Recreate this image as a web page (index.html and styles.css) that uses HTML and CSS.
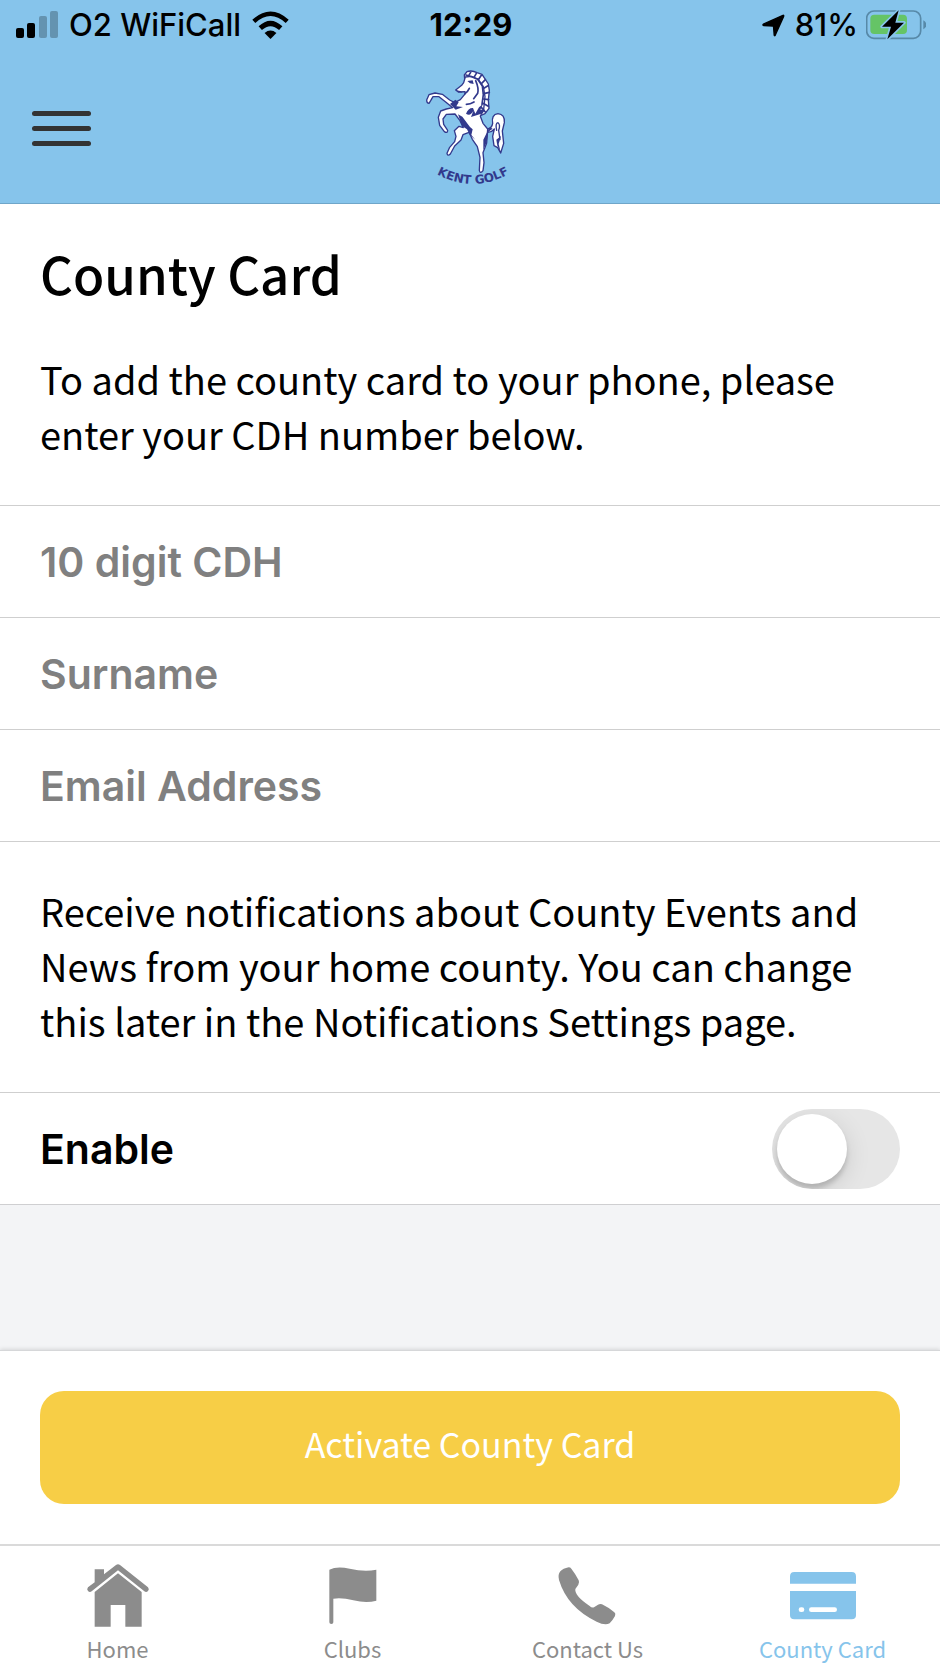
FILE: index.html
```html
<!DOCTYPE html>
<html lang="en">
<head>
<meta charset="utf-8">
<meta name="viewport" content="width=device-width, initial-scale=1">
<title>County Card</title>
<link rel="stylesheet" href="styles.css">
</head>
<body>
<header class="top">
  <div class="status">
    <div class="status-left">
      <svg class="signal" viewBox="0 0 42 28" aria-hidden="true">
        <rect x="0" y="17" width="8" height="10" rx="2"/>
        <rect x="11" y="12" width="8" height="15" rx="2"/>
        <rect x="23" y="5" width="8" height="22" rx="2" opacity=".25"/>
        <rect x="34" y="0" width="8" height="27" rx="2" opacity=".25"/>
      </svg>
      <span>O2 WiFiCall</span>
      <svg class="wifi" viewBox="0 0 112 84" aria-hidden="true">
        <path d="M1 26Q56-24 111 26L102 36Q56-6 10 36Z"/>
        <path d="M20 46Q56 12 92 46L82 57Q56 34 30 57Z"/>
        <path d="M38 66Q56 52 74 66L56 84Z"/>
      </svg>
    </div>
    <span class="clock">12:29</span>
    <div class="status-right">
      <svg class="locate" viewBox="0 0 68 68" aria-hidden="true"><path d="M4 30L62 4Q65 3 64 7L39 63Q37 66 36 62L34 36L5 34Q1 33 4 30Z" stroke="#000" stroke-width="4" stroke-linejoin="round"/></svg>
      <span>81%</span>
      <svg class="battery" viewBox="0 0 180 90" aria-hidden="true">
        <rect x="2" y="3" width="162" height="82" rx="22" fill="none" stroke="#5789a8" stroke-width="5"/>
        <path d="M172 31Q181 36 181 44Q181 53 172 58Z" fill="#5789a8"/>
        <rect x="13" y="14" width="110" height="58" rx="12" fill="#65c466"/>
        <path d="M98 1L48 50H75L64 88L114 38H88Z" fill="#000" stroke="#86c4eb" stroke-width="10" stroke-linejoin="round" paint-order="stroke"/>
      </svg>
    </div>
  </div>
  <nav class="bar">
    <button class="menu" type="button" aria-label="Menu"><span></span><span></span><span></span></button>
    <svg class="logo" viewBox="0 0 360 390" role="img" aria-label="Kent Golf">
      <defs><path id="arc" d="M50 324Q190 420 328 322"/></defs>
      <g fill="#fff" stroke="#32398c" stroke-width="4" stroke-linejoin="round" stroke-linecap="round">
        <path d="M234 207Q246 203 248 190Q243 164 264 161Q285 163 283 188L277 213L281 250L272 279L263 263L252 257L248 229L253 207Q244 218 233 216Z"/>
        <path d="M171 35Q186 30 201 38L216 43L226 58L235 72L238 92L235 120L237 145L225 161L209 168L196 164L205 145L214 112L208 79L189 61L164 57L163 45Z"/>
        <path d="M166 51L184 49L204 57L220 80L225 110L221 148L211 169L219 190L233 207L230 249L219 278L222 308L219 332Q211 343 208 331L210 292L202 260L187 238L177 217L159 224L153 240L134 258L121 282Q113 290 111 280L119 262L134 245L138 229L133 212L147 199L160 203L150 182L135 162L109 163L99 177L101 193L113 211Q113 221 103 215L89 196L85 172L92 153L109 147L128 143L108 127L87 110L69 110L62 122L57 130Q50 130 50 120L57 104L75 99L97 103L119 120L134 128L151 119L166 101L165 95L145 96L137 90L155 76L161 68Z"/>
        <path d="M260 211Q255 189 264 188Q272 194 266 211L270 239" fill="none"/>
      </g>
      <g fill="#32398c">
        <path d="M120 132L136 119L146 127L139 139L159 141L137 149Z"/>
        <path d="M189 144Q175 143 168 161Q181 171 191 151L183 171L202 165L218 160L225 149L211 149L219 132L207 142L196 161Z"/>
        <path d="M144 163L157 170L180 201L188 208L184 225L196 239L179 224L171 208L156 198Z"/>
        <path d="M230 219L220 239L220 270L230 247L235 215L248 206L240 202Z"/>
        <path d="M172 63L188 61L191 72L180 70ZM139 91L151 93L158 98L145 97ZM259 239L273 228L266 252L272 277L262 257Z"/>
      </g>
      <g fill="none" stroke="#32398c" stroke-width="5" stroke-linecap="round">
        <path d="M168 45L185 50L203 58L217 78L220 104L216 133M197 62Q207 85 203 100L191 116M165 101Q174 94 178 85M169 133Q181 133 192 126"/>
        <path d="M182 37L176 47M199 40L192 52M214 46L205 59M226 59L215 70M234 77L219 86M238 97L221 101M236 119L221 117M235 139L219 130M226 156L214 142"/>
      </g>
      <text class="logo-text"><textPath href="#arc" startOffset="50%" text-anchor="middle">KENT GOLF</textPath></text>
    </svg>
  </nav>
</header>
<main class="content">
  <form id="card-form">
    <section class="copy">
      <h1>County Card</h1>
      <p>To add the county card to your phone, please enter your CDH number below.</p>
    </section>
    <input class="field" type="text" inputmode="numeric" placeholder="10 digit CDH" aria-label="10 digit CDH">
    <input class="field" type="text" placeholder="Surname" aria-label="Surname">
    <input class="field" type="email" placeholder="Email Address" aria-label="Email Address">
    <section class="copy notice">
      <p>Receive notifications about County Events and News from your home county. You can change this later in the Notifications Settings page.</p>
    </section>
    <div class="enable">
      <label for="enable">Enable</label>
      <input class="switch" id="enable" type="checkbox" role="switch">
    </div>
  </form>
</main>
<div class="action"><button class="activate" type="submit" form="card-form">Activate County Card</button></div>
<nav class="tabs">
  <a href="#home">
    <svg viewBox="0 0 210 210" aria-hidden="true"><path d="M35 28H63V43L99 15Q105 11 111 15L195 82Q200 88 195 93Q190 98 184 94L105 31L26 94Q20 98 15 93Q10 88 15 82L35 67Z"/><path d="M105 40L176 96V200H127V135H83V200H35V96Z"/></svg>
    <span>Home</span>
  </a>
  <a href="#clubs">
    <svg viewBox="0 0 210 210" aria-hidden="true"><path d="M34 29Q56 18 95 26Q139 36 175 29V122Q145 130 106 121Q72 112 46 116V187Q46 192 40 192Q34 192 34 187Z"/></svg>
    <span>Clubs</span>
  </a>
  <a href="#contact">
    <svg viewBox="0 0 210 210" aria-hidden="true"><path d="M22 34Q30 25 47 22Q52 22 55 26Q67 41 77 61Q80 67 76 74L67 87Q64 107 110 138Q116 144 123 142L135 134Q141 131 147 133Q168 143 184 157Q189 161 186 168Q177 184 170 190Q155 197 131 185Q43 143 18 60Q14 43 22 34Z"/></svg>
    <span>Contact Us</span>
  </a>
  <a class="active" href="#card" aria-current="page">
    <svg viewBox="0 0 210 210" aria-hidden="true"><path d="M6 71V49Q6 36 19 36H191Q204 36 204 49V71ZM6 93H204V166Q204 178 191 178H19Q6 178 6 166ZM39 142Q32 142 32 149Q32 156 39 156H42Q49 156 49 149Q49 142 42 142ZM70 142Q63 142 63 149Q63 156 70 156H140Q147 156 147 149Q147 142 140 142Z" fill-rule="evenodd"/></svg>
    <span>County Card</span>
  </a>
</nav>
</body>
</html>
```
FILE: styles.css
```css
* { box-sizing: border-box; }
body {
  margin: 0;
  min-height: 100vh;
  display: flex;
  flex-direction: column;
  background: #f3f4f6;
  color: #000;
  font-family: "Noto Sans CJK JP", "Noto Sans", sans-serif;
}
.top { background: #86c4eb; border-bottom: 1px solid #6fa6c9; }
.status {
  display: grid;
  grid-template-columns: 1fr auto 1fr;
  align-items: center;
  height: 50px;
  padding: 0 14px 0 16px;
  font: 500 31px/32px Inter, sans-serif;
}
.status-left, .status-right { display: flex; align-items: center; }
.status-left { gap: 11px; }
.status-right { justify-content: flex-end; gap: 8px; }
.clock { font-weight: 700; }
.signal { width: 42px; height: 28px; }
.wifi { width: 37px; height: 28px; }
.locate { width: 23px; height: 23px; margin-right: 2px; }
.battery { width: 60px; height: 30px; }
.bar {
  display: grid;
  grid-template-columns: 1fr auto 1fr;
  align-items: center;
  padding: 10px 32px 13px;
}
.menu {
  display: flex;
  flex-direction: column;
  gap: 10px;
  width: 59px;
  padding: 6px 0 0;
  border: 0;
  background: none;
}
.menu span { width: 100%; height: 5px; border-radius: 3px; background: #333; }
.logo { width: 120px; height: 130px; }
.logo-text { font: 700 36px "DejaVu Sans", sans-serif; fill: #32398c; }
.content form { background: #fff; border-bottom: 1px solid #cfcfd1; }
.copy { padding: 37px 40px 44px; }
h1 { margin: 0 0 46px; font-size: 51px; line-height: 64px; font-weight: 500; }
p { margin: 0; font-size: 38px; line-height: 55px; }
.field {
  display: block;
  width: 100%;
  height: 112px;
  padding: 0 40px;
  border: 0;
  border-top: 1px solid #cfcfcf;
  border-radius: 0;
  background: #fff;
  font: 600 41px/50px Inter, sans-serif;
}
.field::placeholder { color: #808080; opacity: 1; }
.notice { padding-top: 41px; padding-bottom: 44px; border-top: 1px solid #cfcfcf; }
.enable {
  display: flex;
  align-items: center;
  justify-content: space-between;
  height: 112px;
  padding: 0 40px;
  border-top: 1px solid #cfcfcf;
  font: 600 41px/50px Inter, sans-serif;
}
.switch {
  appearance: none;
  width: 128px;
  height: 80px;
  margin: 0;
  padding: 5px;
  border-radius: 40px;
  background: #e6e6e6;
  overflow: hidden;
}
.switch::before {
  content: "";
  display: block;
  width: 70px;
  height: 70px;
  border-radius: 50%;
  background: #fff;
  box-shadow: 0 5px 5px rgba(0, 0, 0, .16), 0 6px 26px rgba(0, 0, 0, .12);
}
.switch:checked { background: #65c466; }
.switch:checked::before { margin-left: auto; }
.action {
  margin-top: auto;
  padding: 40px;
  background: #fff;
  border-top: 1px solid #d6d7d9;
  box-shadow: 0 -1px 4px rgba(0, 0, 0, .12);
}
.activate {
  display: block;
  width: 100%;
  height: 113px;
  padding: 0 0 8px;
  border: 0;
  border-radius: 24px;
  background: #f7ce46;
  color: #fff;
  font: 400 34px/52px "Noto Sans CJK JP", "Noto Sans", sans-serif;
}
.tabs {
  display: grid;
  grid-template-columns: repeat(4, 1fr);
  border-top: 2px solid #dadada;
  background: #fff;
}
.tabs a {
  display: flex;
  flex-direction: column;
  align-items: center;
  padding: 14px 0 7px;
  color: #8c8c8c;
  font-size: 22px;
  line-height: 32px;
  text-decoration: none;
  gap: 2px;
}
.tabs svg { width: 70px; height: 70px; fill: currentColor; }
.tabs .active { color: #86c4eb; }
```
